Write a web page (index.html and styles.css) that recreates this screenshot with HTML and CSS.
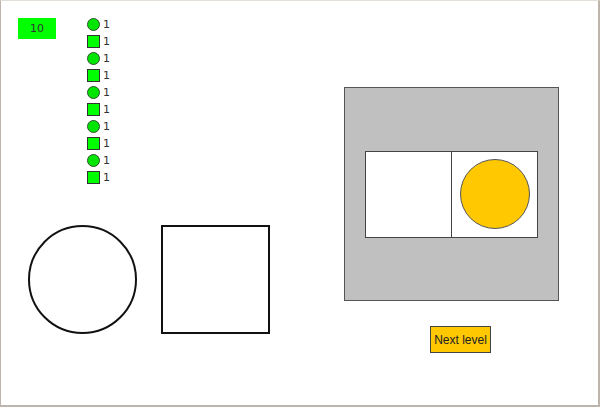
FILE: index.html
```html
<!DOCTYPE html>
<html lang="en">
<head>
    <meta charset="UTF-8">
    <title>Shapes</title>
    <link rel="stylesheet" href="styles.css">
</head>
<body>
    <div class="frame">
        <div class="left">
            <div class="top-row">
                <div class="score">10</div>
                <div class="list">
                    <div class="item"><span class="dot"></span>1</div>
                    <div class="item"><span class="box"></span>1</div>
                    <div class="item"><span class="dot"></span>1</div>
                    <div class="item"><span class="box"></span>1</div>
                    <div class="item"><span class="dot"></span>1</div>
                    <div class="item"><span class="box"></span>1</div>
                    <div class="item"><span class="dot"></span>1</div>
                    <div class="item"><span class="box"></span>1</div>
                    <div class="item"><span class="dot"></span>1</div>
                    <div class="item"><span class="box"></span>1</div>
                </div>
            </div>
            <div class="shapes">
                <div class="big-circle"></div>
                <div class="big-square"></div>
            </div>
        </div>
        <div class="right">
            <div class="panel">
                <div class="slots">
                    <div class="slot"></div>
                    <div class="slot"><div class="token"></div></div>
                </div>
            </div>
            <button class="next-btn">Next level</button>
        </div>
    </div>
</body>
</html>
```

FILE: styles.css
```css
body {
    margin: 0;
    font-family: "DejaVu Sans", sans-serif;
    background: #fff;
}
.frame {
    box-sizing: border-box;
    width: 600px;
    height: 407px;
    border-style: solid;
    border-width: 1px 2px 2px 1px;
    border-color: #e3ded8 #bdb5ab #bdb5ab #bdb5ab;
    padding: 17px 0 0 17px;
    display: flex;
    align-items: flex-start;
}
.left {
    display: flex;
    flex-direction: column;
    width: 252px;
}
.top-row {
    display: flex;
    align-items: flex-start;
}
.score {
    width: 38px;
    height: 21px;
    line-height: 21px;
    background-color: #00ff00;
    color: #333;
    font-size: 11px;
    text-align: center;
    margin-right: 31px;
}
.list {
    display: flex;
    flex-direction: column;
    gap: 4px;
}
.item {
    display: flex;
    align-items: center;
    gap: 3px;
    height: 13px;
    font-size: 11px;
    color: #333;
}
.dot, .box {
    box-sizing: border-box;
    width: 13px;
    height: 13px;
    border: 1px solid #2f4f2f;
}
.dot {
    border-radius: 50%;
    background-color: #00e600;
}
.box {
    background-color: #00ff00;
    border-color: #333;
}
.shapes {
    display: flex;
    gap: 24px;
    margin: 41px 0 0 10px;
}
.big-circle, .big-square {
    box-sizing: border-box;
    width: 109px;
    height: 109px;
    border: 2px solid #111;
}
.big-circle {
    border-radius: 50%;
}
.right {
    display: flex;
    flex-direction: column;
    align-items: flex-start;
    margin: 69px 0 0 74px;
}
.panel {
    box-sizing: border-box;
    width: 215px;
    height: 214px;
    border: 1px solid #555;
    background-color: #c0c0c0;
    display: flex;
    align-items: center;
    justify-content: center;
}
.slots {
    display: flex;
    border: 1px solid #444;
    background: #fff;
}
.slot {
    width: 85px;
    height: 85px;
    display: flex;
    align-items: center;
    justify-content: center;
}
.slot + .slot {
    border-left: 1px solid #444;
}
.token {
    box-sizing: border-box;
    width: 70px;
    height: 70px;
    border-radius: 50%;
    border: 1px solid #555;
    background-color: #ffc800;
}
.next-btn {
    box-sizing: border-box;
    width: 61px;
    height: 27px;
    margin: 25px 0 0 86px;
    padding: 0;
    border: 1px solid #444;
    border-radius: 0;
    background-color: #ffc800;
    color: #222;
    font-family: "Liberation Sans", Arial, sans-serif;
    font-size: 12px;
}
```
